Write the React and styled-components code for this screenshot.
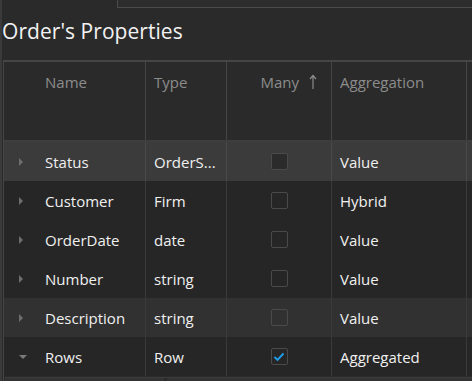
import React from "react";
import styled, { createGlobalStyle } from "styled-components";

const Global = createGlobalStyle`
  html, body { margin: 0; padding: 0; background: #2a2a2a; }
  body { font-family: "Open Sans", "Noto Sans", sans-serif; overflow: hidden; }
`;

const Page = styled.div`
  width: 472px;
  height: 381px;
  background: #2a2a2a;
  display: flex;
  flex-direction: column;
  border-left: 2px solid #3a3a3a;
  box-sizing: border-box;
  overflow: hidden;
`;

const TopBar = styled.div`
  height: 8px;
  display: flex;
  flex-shrink: 0;
`;

const TopSpacer = styled.div`
  width: 115px;
`;

const TopBox = styled.div`
  flex: 1;
  margin-top: -2px;
  background: #2d2d2d;
  border: 1px solid #4a4a4a;
  border-right: none;
`;

const Title = styled.h1`
  margin: 0;
  height: 52px;
  flex-shrink: 0;
  display: flex;
  align-items: center;
  padding: 0 0 6px 0;
  box-sizing: border-box;
  font-size: 21px;
  font-weight: 400;
  color: #f2f2f2;
  letter-spacing: 0.05px;
`;

const Table = styled.div`
  margin-left: 1px;
  border-top: 2px solid #454545;
  border-left: 1px solid #454545;
  display: flex;
  flex-direction: column;
  flex: 1;
`;

const cols = "142px 81px 105px 135px 1fr";

const HeaderRow = styled.div`
  display: grid;
  grid-template-columns: ${cols};
  height: 78px;
  border-bottom: 2px solid #3e3e3e;
  background: #2a2a2a;
`;

const HeadCell = styled.div`
  border-right: 1px solid #454545;
  color: #8c8c8c;
  font-size: 15px;
  padding-top: 10px;
  padding-left: ${(p) => p.$pl || 8}px;
  display: flex;
  align-items: flex-start;
  justify-content: ${(p) => (p.$right ? "flex-end" : "flex-start")};
  padding-right: ${(p) => p.$pr || 0}px;
  gap: 10px;
  &:last-child { border-right: none; }
`;

const Row = styled.div`
  display: grid;
  grid-template-columns: ${cols};
  height: 39px;
  background: ${(p) => p.$bg};
`;

const Cell = styled.div`
  border-right: 1px solid ${(p) => p.$line || "#3a3a3a"};
  display: flex;
  align-items: center;
  color: #f0f0f0;
  font-size: 15px;
  padding-left: ${(p) => p.$pl ?? 8}px;
  justify-content: ${(p) => (p.$center ? "center" : "flex-start")};
  white-space: nowrap;
  overflow: hidden;
  &:last-child { border-right: none; }
`;

const Expander = styled.span`
  width: 27px;
  margin-left: 14px;
  display: flex;
  align-items: center;
`;

const Box = styled.div`
  width: 15px;
  height: 15px;
  border: 1px solid #4a4a4a;
  border-radius: 2px;
  background: ${(p) => p.$fill || "transparent"};
  display: flex;
  align-items: center;
  justify-content: center;
`;

const Footer = styled.div`
  height: 6px;
  margin-top: 1px;
  display: flex;
  gap: 3px;
  margin-left: 1px;
  border-top: 1px solid #3c3c3c;
`;

const FooterPart = styled.div`
  background: #333;
  width: ${(p) => p.$w || "auto"};
  flex: ${(p) => (p.$w ? "none" : 1)};
`;

const Right = () => (
  <svg width="6" height="10" viewBox="0 0 6 10">
    <path d="M1 1 L5 5 L1 9 Z" fill="#6e6e6e" />
  </svg>
);
const Down = () => (
  <svg width="10" height="6" viewBox="0 0 10 6">
    <path d="M1 1 L9 1 L5 5 Z" fill="#7a7a7a" />
  </svg>
);
const UpArrow = () => (
  <svg width="8" height="16" viewBox="0 0 8 16" style={{ marginTop: 2 }}>
    <path d="M4 15 V2 M1 5 L4 1.5 L7 5" stroke="#8c8c8c" strokeWidth="1.2" fill="none" />
  </svg>
);
const Check = () => (
  <svg width="12" height="10" viewBox="0 0 12 10">
    <path d="M1.5 5 L4.5 8 L10.5 1.5" stroke="#1e9de8" strokeWidth="1.9" fill="none" />
  </svg>
);

const rows = [
  { name: "Status", type: "OrderS...", agg: "Value", bg: "#3b3b3b", fill: "#2b2b2b", line: "#4a4a4a" },
  { name: "Customer", type: "Firm", agg: "Hybrid", bg: "#262626" },
  { name: "OrderDate", type: "date", agg: "Value", bg: "#262626" },
  { name: "Number", type: "string", agg: "Value", bg: "#262626" },
  { name: "Description", type: "string", agg: "Value", bg: "#313131" },
  { name: "Rows", type: "Row", agg: "Aggregated", bg: "#262626", open: true, checked: true },
];

export default function App() {
  return (
    <Page>
      <Global />
      <TopBar>
        <TopSpacer />
        <TopBox />
      </TopBar>
      <Title>Order's Properties</Title>
      <Table>
        <HeaderRow>
          <HeadCell $pl={41}>Name</HeadCell>
          <HeadCell>Type</HeadCell>
          <HeadCell $right $pr={14}>
            <span>Many</span>
            <UpArrow />
          </HeadCell>
          <HeadCell>Aggregation</HeadCell>
          <HeadCell />
        </HeaderRow>
        {rows.map((r) => (
          <Row key={r.name} $bg={r.bg}>
            <Cell $pl={0} $line={r.line}>
              <Expander>{r.open ? <Down /> : <Right />}</Expander>
              {r.name}
            </Cell>
            <Cell $line={r.line}>{r.type}</Cell>
            <Cell $pl={0} $center $line={r.line}>
              <Box $fill={r.fill}>{r.checked && <Check />}</Box>
            </Cell>
            <Cell $line={r.line}>{r.agg}</Cell>
            <Cell />
          </Row>
        ))}
        <Footer>
          <FooterPart $w="159px" />
          <FooterPart />
        </Footer>
      </Table>
    </Page>
  );
}
